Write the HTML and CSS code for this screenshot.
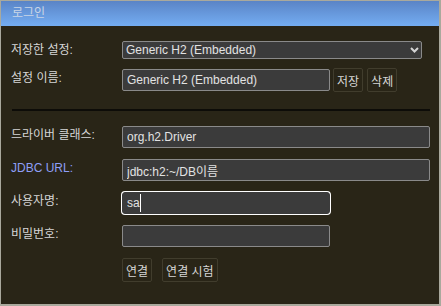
FILE: index.html
```html
<!DOCTYPE html>
<html lang="ko">
<head>
    <meta charset="UTF-8">
    <title>로그인</title>
    <link rel="stylesheet" href="styles.css">
</head>
<body>
    <div class="window">
        <div class="titlebar">로그인</div>

        <div class="content">
            <!-- Saved settings -->
            <div class="form top">
                <label>저장한 설정:</label>
                <div class="select-wrap">
                    <select>
                        <option>Generic H2 (Embedded)</option>
                    </select>
                    <svg class="chevron" width="9" height="6" viewBox="0 0 9 6">
                        <path d="M1 1 L4.5 4.5 L8 1" fill="none" stroke="#d4d4d4" stroke-width="2"/>
                    </svg>
                </div>

                <label>설정 이름:</label>
                <div class="inline">
                    <input class="short" type="text" value="Generic H2 (Embedded)">
                    <button>저장</button>
                    <button class="del">삭제</button>
                </div>
            </div>

            <hr>

            <!-- Connection -->
            <div class="form bottom">
                <label>드라이버 클래스:</label>
                <input type="text" value="org.h2.Driver">

                <label class="jdbc">JDBC URL:</label>
                <input type="text" value="jdbc:h2:~/DB이름">

                <label>사용자명:</label>
                <div class="field">
                    <input class="short focused" type="text" value="sa">
                    <span class="caret"></span>
                </div>

                <label>비밀번호:</label>
                <input class="short" type="password">

                <span></span>
                <div class="actions">
                    <button>연결</button>
                    <button>연결 시험</button>
                </div>
            </div>
        </div>
    </div>
</body>
</html>
```

FILE: styles.css
```css
* {
    box-sizing: border-box;
}
body {
    margin: 0;
    background: #a9a99d;
    font-family: "Liberation Sans", "Noto Sans CJK KR", sans-serif;
    font-size: 12px;
}
.window {
    width: 441px;
    height: 306px;
    border-style: solid;
    border-color: #a9a99d;
    border-width: 1px 2px 2px 1px;
    background: #292517;
}
.titlebar {
    height: 25px;
    line-height: 25px;
    padding-left: 11px;
    color: #c9d5e6;
    font-size: 12px;
    background: linear-gradient(#5a84c6, #74adf2);
}
.content {
    padding: 15px 9px 0 10px;
}
.form {
    display: grid;
    grid-template-columns: 111px 1fr;
    align-items: start;
}
.form.top {
    row-gap: 10px;
}
.form.bottom {
    row-gap: 11px;
}
label {
    color: #d6d6d6;
    line-height: 16px;
    padding-top: 1px;
}
label.jdbc {
    color: #8e9ef5;
}
input, select {
    font-family: inherit;
    font-size: 12px;
    height: 22px;
    padding: 0 4px;
    color: #e2e2e2;
    background: #3b3b3b;
    border: 1px solid #8a8a8a;
    border-radius: 2px;
    outline: none;
}
.short {
    width: 208px;
}
.select-wrap {
    position: relative;
    width: 300px;
}
select {
    appearance: none;
    width: 300px;
    height: 18px;
    padding: 0 3px;
}
.chevron {
    position: absolute;
    right: 3px;
    top: 6px;
}
.inline {
    display: flex;
    align-items: center;
    margin-top: -1px;
}
.inline input {
    margin-right: 3px;
}
button {
    font-family: inherit;
    font-size: 12px;
    height: 24px;
    padding: 0 3px;
    color: #d6d6d6;
    background: #292517;
    border: 1px solid #413d2d;
    border-radius: 2px;
}
.del {
    margin-left: 4px;
}
.field {
    position: relative;
}
.focused {
    border: 1px solid #3b3b3b;
    box-shadow: 0 0 0 1px #ffffff;
    border-radius: 3px;
}
.caret {
    position: absolute;
    left: 18px;
    top: 2px;
    width: 1px;
    height: 18px;
    background: #ffffff;
}
hr {
    margin: 17px 0 15px 1px;
    border: 0;
    height: 2px;
    background: #0d0c08;
}
.actions {
    display: flex;
    gap: 10px;
}
```
